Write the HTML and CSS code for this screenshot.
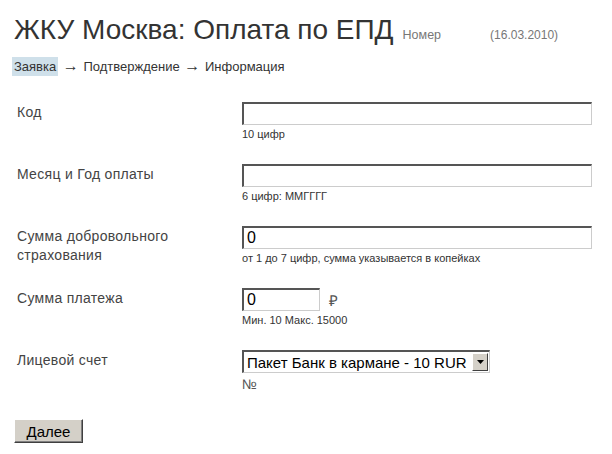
FILE: index.html
```html
<!DOCTYPE html>
<html lang="ru">
<head>
    <meta charset="UTF-8">
    <title>ЖКУ Москва: Оплата по ЕПД</title>
    <link rel="stylesheet" href="styles.css">
</head>
<body>
    <div class="page">
        <div class="header">
            <h1>ЖКУ Москва: Оплата по ЕПД</h1>
            <span class="number">Номер</span>
            <span class="date">(16.03.2010)</span>
        </div>

        <div class="steps">
            <span class="step active">Заявка</span>
            <span class="arrow">→</span>
            <span class="step">Подтверждение</span>
            <span class="arrow">→</span>
            <span class="step">Информация</span>
        </div>

        <form class="pay-form" onsubmit="return false;">
            <div class="row">
                <label for="code">Код</label>
                <div class="field">
                    <input type="text" id="code" class="wide">
                    <div class="hint">10 цифр</div>
                </div>
            </div>

            <div class="row">
                <label for="period">Месяц и Год оплаты</label>
                <div class="field">
                    <input type="text" id="period" class="wide">
                    <div class="hint">6 цифр: ММГГГГ</div>
                </div>
            </div>

            <div class="row">
                <label for="insurance">Сумма добровольного<br>страхования</label>
                <div class="field">
                    <input type="text" id="insurance" class="wide" value="0">
                    <div class="hint">от 1 до 7 цифр, сумма указывается в копейках</div>
                </div>
            </div>

            <div class="row">
                <label for="amount">Сумма платежа</label>
                <div class="field">
                    <div class="amount-line">
                        <input type="text" id="amount" class="short" value="0">
                        <span class="rub">₽</span>
                    </div>
                    <div class="hint">Мин. 10 Макс. 15000</div>
                </div>
            </div>

            <div class="row">
                <label for="account">Лицевой счет</label>
                <div class="field">
                    <div class="select-box">
                        <select id="account">
                            <option>Пакет Банк в кармане - 10 RUR</option>
                        </select>
                        <span class="select-btn">
                            <svg width="7" height="4" viewBox="0 0 7 4"><path d="M0 0h7L3.5 4z" fill="#000"/></svg>
                        </span>
                    </div>
                    <div class="num">№</div>
                </div>
            </div>

            <button type="submit" class="next">Далее</button>
        </form>
    </div>
</body>
</html>
```

FILE: styles.css
```css
body {
    margin: 0;
    padding: 0;
    background: #fff;
    font-family: "Liberation Sans", Arial, sans-serif;
    color: #333;
}

.page {
    padding: 14px 0 0 14px;
}

.header {
    display: flex;
    align-items: baseline;
    height: 36px;
}

.header h1 {
    margin: 0;
    font-size: 28px;
    font-weight: normal;
    color: #333;
}

.number {
    margin-left: 9px;
    font-size: 12.5px;
    color: #777;
}

.date {
    margin-left: 49px;
    font-size: 12px;
    color: #777;
}

.steps {
    margin-top: 9px;
    font-size: 13px;
    color: #333;
}

.step.active {
    background: #cfe0ea;
    padding: 2px 2px;
    margin-left: -2px;
}

.arrow {
    margin: 0 1px;
    font-size: 16px;
    line-height: 13px;
}

.pay-form {
    margin-top: 28px;
    padding-left: 3px;
}

.row {
    display: grid;
    grid-template-columns: 225px 350px;
    height: 62px;
}

.row label {
    font-size: 14px;
    line-height: 19px;
    padding-top: 1px;
    color: #444;
    letter-spacing: 0.3px;
}

.field input {
    box-sizing: border-box;
    height: 23px;
    margin: 0;
    padding: 1px 3px;
    font-family: "Liberation Sans", Arial, sans-serif;
    font-size: 16px;
    color: #000;
    border: 1px solid #ccc;
    border-top: 2px solid #555;
    border-left: 2px solid #555;
    background: #fff;
    outline: none;
}

.field input.wide {
    width: 350px;
}

.field input.short {
    width: 78px;
}

.hint {
    margin-top: 3px;
    font-size: 11px;
    color: #333;
}

.amount-line {
    display: flex;
    align-items: center;
}

.rub {
    margin-left: 9px;
    font-size: 15px;
    color: #555;
}

.select-box {
    display: inline-flex;
    box-sizing: border-box;
    height: 23px;
    width: 248px;
    border: 1px solid #ccc;
    border-top: 2px solid #555;
    border-left: 2px solid #555;
    background: #fff;
}

.select-box select {
    appearance: none;
    -webkit-appearance: none;
    flex: 1;
    min-width: 0;
    border: none;
    margin: 0;
    padding: 0 0 0 3px;
    background: #fff;
    font-family: "Liberation Sans", Arial, sans-serif;
    font-size: 15px;
    color: #000;
    outline: none;
}

.select-btn {
    display: flex;
    flex: none;
    align-items: center;
    justify-content: center;
    box-sizing: border-box;
    width: 16px;
    margin: 1px 1px 1px 0;
    background: #d4d0c8;
    border: 1px solid;
    border-color: #fff #404040 #404040 #fff;
}

.num {
    margin-top: 3px;
    font-size: 14px;
    color: #555;
}

.next {
    display: block;
    margin: 7px 0 0 -3px;
    width: 69px;
    height: 24px;
    padding: 0;
    font-family: "Liberation Sans", Arial, sans-serif;
    font-size: 15px;
    color: #000;
    background: #d4d0c8;
    border: 1px solid;
    border-color: #fff #404040 #404040 #fff;
    box-shadow: inset -1px -1px 0 #808080;
    cursor: pointer;
}
```
